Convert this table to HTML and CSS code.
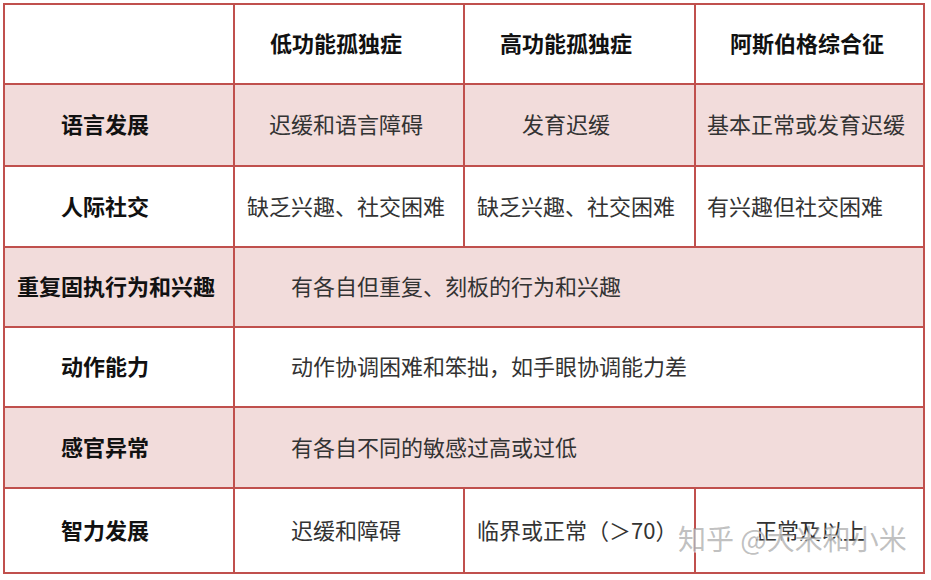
FILE: index.html
```html
<!DOCTYPE html>
<html lang="zh-CN">
<head>
<meta charset="utf-8">
<title>孤独症对比</title>
<link rel="stylesheet" href="styles.css">
</head>
<body>
<div class="page">
  <div class="table">
    <div class="cell"></div>
    <div class="cell head pad-35">低功能孤独症</div>
    <div class="cell head pad-35">高功能孤独症</div>
    <div class="cell head pad-34">阿斯伯格综合征</div>

    <div class="cell label pink pad-56">语言发展</div>
    <div class="cell pink pad-34">迟缓和语言障碍</div>
    <div class="cell pink pad-57">发育迟缓</div>
    <div class="cell pink pad-11">基本正常或发育迟缓</div>

    <div class="cell label pad-56">人际社交</div>
    <div class="cell pad-12">缺乏兴趣、社交困难</div>
    <div class="cell pad-12">缺乏兴趣、社交困难</div>
    <div class="cell pad-11">有兴趣但社交困难</div>

    <div class="cell label pink pad-12">重复固执行为和兴趣</div>
    <div class="cell pink span3 pad-56">有各自但重复、刻板的行为和兴趣</div>

    <div class="cell label pad-56">动作能力</div>
    <div class="cell span3 pad-56">动作协调困难和笨拙，如手眼协调能力差</div>

    <div class="cell label pink pad-56">感官异常</div>
    <div class="cell pink span3 pad-56">有各自不同的敏感过高或过低</div>

    <div class="cell label pad-56">智力发展</div>
    <div class="cell pad-56">迟缓和障碍</div>
    <div class="cell pad-12">临界或正常（＞70）</div>
    <div class="cell pad-59">正常及以上</div>
  </div>
  <div class="watermark">知乎 @大米和小米</div>
</div>
</body>
</html>
```

FILE: styles.css
```css
html, body {
  margin: 0;
  padding: 0;
  background: #ffffff;
}

.page {
  position: relative;
  width: 931px;
  height: 580px;
  padding: 3px 0 0 3px;
  box-sizing: border-box;
  font-family: "Noto Sans CJK SC", "Noto Sans", sans-serif;
}

.table {
  display: grid;
  grid-template-columns: 228px 228px 229px 227px;
  grid-template-rows: 78px 80px 79px 78px 78px 79px 83px;
  gap: 2px;
  padding: 2px;
  width: max-content;
  background: #c0504d;
}

.cell {
  background: #ffffff;
  display: flex;
  align-items: center;
  padding-bottom: 4px;
  box-sizing: border-box;
  font-size: 22px;
  line-height: 1;
  color: #333333;
  white-space: nowrap;
}

.pink {
  background: #f2dcdb;
}

.head,
.label {
  font-weight: 700;
  color: #111111;
}

.span3 {
  grid-column: span 3;
}

.pad-11 { padding-left: 11px; }
.pad-12 { padding-left: 12px; }
.pad-34 { padding-left: 34px; }
.pad-35 { padding-left: 35px; }
.pad-56 { padding-left: 56px; }
.pad-57 { padding-left: 57px; }
.pad-59 { padding-left: 59px; }

.watermark {
  position: absolute;
  left: 678px;
  top: 524px;
  font-size: 28px;
  line-height: 1;
  color: rgba(140, 140, 140, 0.55);
  text-shadow: 1px 1px 0 rgba(255, 255, 255, 0.8);
  white-space: nowrap;
}
```
